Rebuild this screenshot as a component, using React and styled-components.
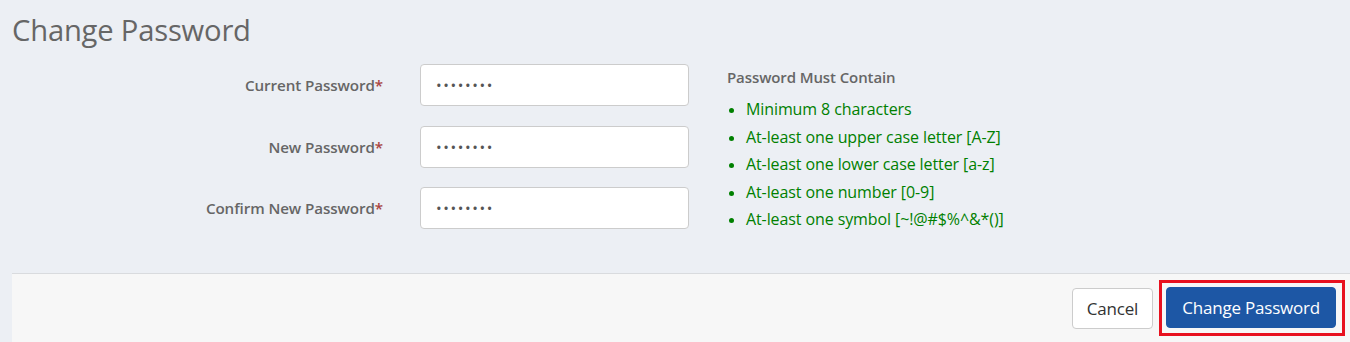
import React from "react";
import styled, { createGlobalStyle } from "styled-components";

const GlobalStyle = createGlobalStyle`
  html, body {
    margin: 0;
    padding: 0;
    background: #eceff4;
  }
  body {
    font-family: "Open Sans", "Noto Sans", "Liberation Sans", sans-serif;
  }
`;

const Page = styled.div`
  width: 1350px;
  height: 342px;
  overflow: hidden;
  background: #eceff4;
  padding-left: 12px;
  box-sizing: border-box;
`;

const Title = styled.h2`
  margin: 0;
  padding-top: 10px;
  height: 50px;
  font-size: 29.2px;
  line-height: 40px;
  font-weight: 400;
  color: #666;
  letter-spacing: -0.2px;
`;

const Body = styled.div`
  display: flex;
  align-items: flex-start;
  padding-top: 4px;
  height: 213px;
  box-sizing: border-box;
`;

const Form = styled.div`
  display: grid;
  grid-template-columns: 371px 269px;
  column-gap: 37px;
  row-gap: 19.5px;
  align-items: center;
`;

const Label = styled.label`
  text-align: right;
  font-size: 15.2px;
  font-weight: 600;
  color: #666;
  letter-spacing: -0.1px;
`;

const Req = styled.span`
  color: #a94442;
`;

const Input = styled.input`
  height: 42px;
  box-sizing: border-box;
  border: 1px solid #ccc;
  border-radius: 4px;
  background: #fff;
  padding: 0 15px;
  font-size: 15px;
  color: #555;
  letter-spacing: 1.6px;
  outline: none;
  font-family: inherit;
`;

const Rules = styled.div`
  margin-left: 38px;
  margin-top: 2px;
`;

const RulesTitle = styled.div`
  font-size: 15px;
  font-weight: 600;
  color: #666;
  line-height: 22px;
  letter-spacing: -0.1px;
`;

const RuleList = styled.ul`
  margin: 8px 0 0;
  padding: 0 0 0 19px;
  list-style: none;
`;

const Rule = styled.li`
  position: relative;
  font-size: 16px;
  line-height: 27.5px;
  color: #008000;
  letter-spacing: -0.1px;

  &::before {
    content: "";
    position: absolute;
    left: -17px;
    top: 12px;
    width: 5px;
    height: 5px;
    border-radius: 50%;
    background: #008000;
  }
`;

const Footer = styled.div`
  display: flex;
  justify-content: flex-end;
  align-items: flex-start;
  gap: 6px;
  border-top: 1px solid #d9dbde;
  background: #f7f7f7;
  padding: 6px 5px 0 0;
  height: 80px;
  box-sizing: border-box;
`;

const Button = styled.button`
  height: 41px;
  box-sizing: border-box;
  border-radius: 4px;
  font-family: inherit;
  font-size: 17px;
  padding: 0 ${(p) => (p.$primary ? "15px" : "14px")};
  letter-spacing: -0.2px;
  cursor: pointer;
  border: 1px solid ${(p) => (p.$primary ? "#1d57a5" : "#ccc")};
  background: ${(p) => (p.$primary ? "#1d57a5" : "#fff")};
  color: ${(p) => (p.$primary ? "#fff" : "#333")};
`;

const CancelWrap = styled.div`
  padding-top: 8px;
`;

const Highlight = styled.div`
  border: 3px solid #e8111f;
  padding: 4px 6px 5px 4px;
`;

const fields = ["Current Password", "New Password", "Confirm New Password"];

const rules = [
  "Minimum 8 characters",
  "At-least one upper case letter [A-Z]",
  "At-least one lower case letter [a-z]",
  "At-least one number [0-9]",
  "At-least one symbol [~!@#$%^&*()]",
];

export default function App() {
  return (
    <>
      <GlobalStyle />
      <Page>
        <Title>Change Password</Title>
        <Body>
          <Form>
            {fields.map((f) => (
              <React.Fragment key={f}>
                <Label>
                  {f}
                  <Req>*</Req>
                </Label>
                <Input type="password" defaultValue="password" readOnly />
              </React.Fragment>
            ))}
          </Form>
          <Rules>
            <RulesTitle>Password Must Contain</RulesTitle>
            <RuleList>
              {rules.map((r) => (
                <Rule key={r}>{r}</Rule>
              ))}
            </RuleList>
          </Rules>
        </Body>
        <Footer>
          <CancelWrap>
            <Button>Cancel</Button>
          </CancelWrap>
          <Highlight>
            <Button $primary>Change Password</Button>
          </Highlight>
        </Footer>
      </Page>
    </>
  );
}
